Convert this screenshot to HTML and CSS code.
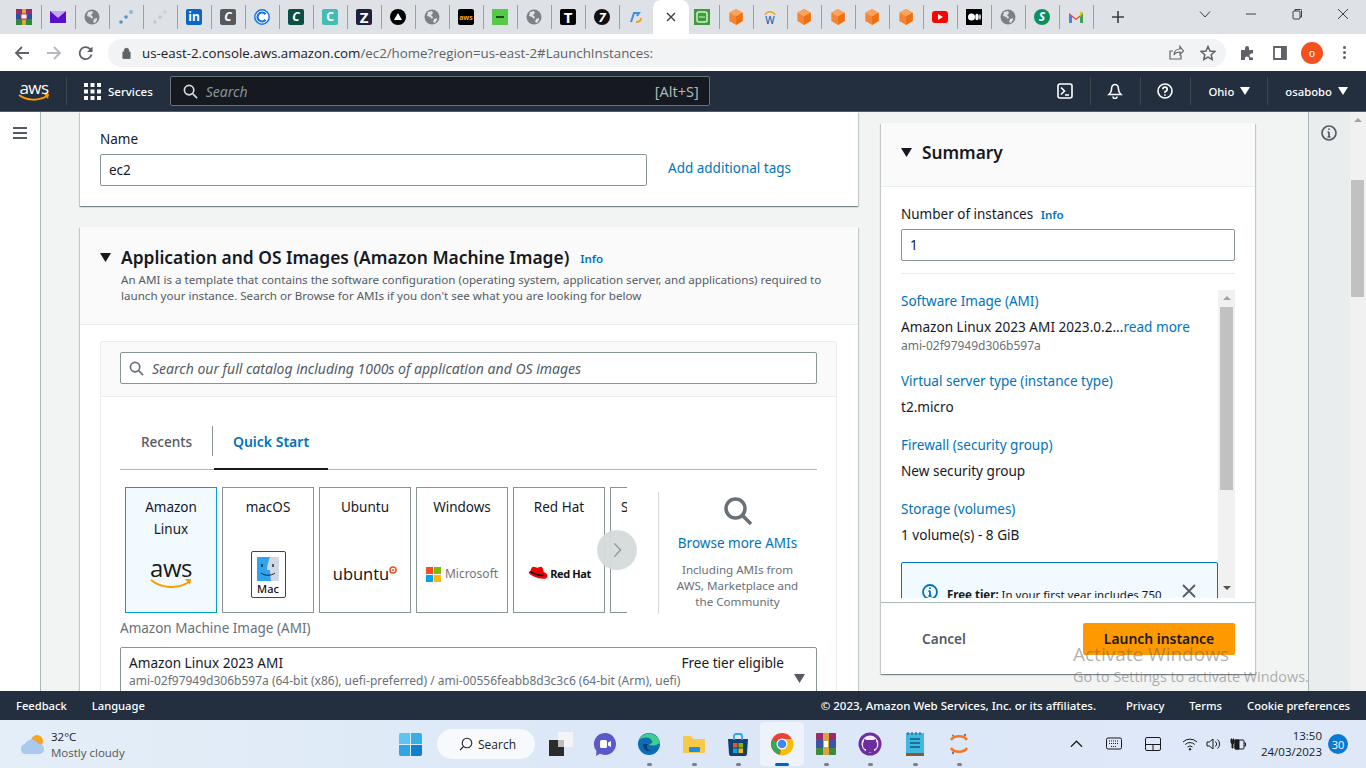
FILE: index.html
```html
<!DOCTYPE html>
<html lang="en">
<head>
    <meta charset="UTF-8">
    <title>Launch an instance | EC2 Management Console</title>
    <link rel="stylesheet" href="styles.css">
</head>
<body>
    <svg class="defs" width="0" height="0">
        <symbol id="globe" viewBox="0 0 16 16">
            <circle cx="8" cy="8" r="7.5" fill="#7d8186"/>
            <path d="M4 3l4-1 1 2-2 2 2 2-1 2-2-2-3-1zM10 10l3-1 0 2-2 3-2-1z" fill="#dee1e6"/>
        </symbol>
        <symbol id="cube" viewBox="0 0 16 18">
            <path d="M8 0l7.5 4.2v9.3L8 18 .5 13.500V4.200z" fill="#f58536"/>
            <path d="M8 0l7.500 4.200L8 8.500.5 4.200z" fill="#f9a35c"/>
            <path d="M8 8.500V18l7.500-4.500V4.200z" fill="#ec7211"/>
        </symbol>
        <symbol id="caret" viewBox="0 0 10 8">
            <path d="M0 0h10L5 8z"/>
        </symbol>
    </svg>

    <!-- Browser tabs -->
    <div class="tabstrip">
        <div class="tab"><svg class="fav" viewBox="0 0 16 16"><rect width="16" height="5" fill="#9c2a6b"/><rect y="5" width="16" height="5" fill="#2b4fa8"/><rect y="10" width="16" height="6" fill="#2f8a3c"/><rect x="6" width="4" height="16" fill="#d9a441"/><rect x="5" y="5" width="6" height="5" fill="#fff" stroke="#b33" /></svg></div>
        <div class="tab"><svg class="fav" viewBox="0 0 16 16"><rect y="2" width="16" height="12" fill="#5a0fc8"/><path d="M0 2h16L8 9z" fill="#c9a6f5"/></svg></div>
        <div class="tab"><svg class="fav"><use href="#globe"/></svg></div>
        <div class="tab"><svg class="fav" viewBox="0 0 16 16"><circle cx="3" cy="13" r="1.800" fill="#5b8dd6"/><circle cx="8" cy="8" r="1.800" fill="#5b8dd6"/><circle cx="13" cy="3" r="2" fill="#8fb4e6"/></svg></div>
        <div class="tab"><svg class="fav" viewBox="0 0 16 16"><circle cx="3" cy="13" r="1.800" fill="#c4c7cb"/><circle cx="8" cy="8" r="1.800" fill="#c4c7cb"/><circle cx="13" cy="3" r="2" fill="#d0d3d6"/></svg></div>
        <div class="tab"><span class="letter linkedin">in</span></div>
        <div class="tab"><span class="letter coursera">C</span></div>
        <div class="tab"><svg class="fav" viewBox="0 0 16 16"><circle cx="8" cy="8" r="7.200" fill="#fff" stroke="#1673e6" stroke-width="1.500"/><path d="M11.500 5.200a4.500 4.500 0 1 0 0 5.600" fill="none" stroke="#1673e6" stroke-width="2.200"/></svg></div>
        <div class="tab"><span class="letter cdark">C</span></div>
        <div class="tab"><span class="letter cteal">C</span></div>
        <div class="tab"><span class="letter zed">Z</span></div>
        <div class="tab"><svg class="fav" viewBox="0 0 16 16"><circle cx="8" cy="8" r="8" fill="#000"/><path d="M8 4l4 7H4z" fill="#fff"/></svg></div>
        <div class="tab"><svg class="fav"><use href="#globe"/></svg></div>
        <div class="tab"><span class="letter awsfav">aws</span></div>
        <div class="tab"><svg class="fav" viewBox="0 0 16 16"><rect width="16" height="16" fill="#56c94a"/><rect x="4" y="7" width="8" height="2" fill="#184d16"/></svg></div>
        <div class="tab"><svg class="fav"><use href="#globe"/></svg></div>
        <div class="tab"><span class="letter tfav">T</span></div>
        <div class="tab"><span class="letter sevenfav">7</span></div>
        <div class="tab"><svg class="fav" viewBox="0 0 16 16"><path d="M3 13L6 4h5l-2 3" fill="none" stroke="#3b8fe0" stroke-width="2"/><path d="M8 13c3 0 5-1 5-4" fill="none" stroke="#f0a030" stroke-width="2"/></svg></div>
        <div class="tab tab-active"><svg class="closex" viewBox="0 0 10 10"><path d="M1 1l8 8M9 1l-8 8"/></svg></div>
        <div class="tab"><svg class="fav" viewBox="0 0 16 16"><rect width="16" height="16" fill="#3f9a3c"/><rect x="3" y="3" width="10" height="10" rx="2" fill="none" stroke="#d7f0d0" stroke-width="1.500"/><path d="M5 8h6" stroke="#d7f0d0"/></svg></div>
        <div class="tab"><svg class="fav"><use href="#cube"/></svg></div>
        <div class="tab"><svg class="fav" viewBox="0 0 16 16"><path d="M3 6a5.500 5.500 0 0 1 10 0" fill="none" stroke="#f5a623" stroke-width="1.400"/><text x="8" y="14.500" class="wfav">W</text></svg></div>
        <div class="tab"><svg class="fav"><use href="#cube"/></svg></div>
        <div class="tab"><svg class="fav"><use href="#cube"/></svg></div>
        <div class="tab"><svg class="fav"><use href="#cube"/></svg></div>
        <div class="tab"><svg class="fav"><use href="#cube"/></svg></div>
        <div class="tab"><svg class="fav" viewBox="0 0 16 16"><rect y="2" width="16" height="12" rx="3" fill="#f00"/><path d="M6 5l5 3-5 3z" fill="#fff"/></svg></div>
        <div class="tab"><svg class="fav" viewBox="0 0 16 16"><rect width="16" height="16" fill="#000"/><circle cx="5.500" cy="8" r="3.500" fill="#fff"/><ellipse cx="11" cy="8" rx="1.700" ry="3.300" fill="#fff"/><ellipse cx="14" cy="8" rx=".8" ry="3" fill="#fff"/></svg></div>
        <div class="tab"><svg class="fav"><use href="#globe"/></svg></div>
        <div class="tab"><span class="letter sfav">S</span></div>
        <div class="tab tab-last"><svg class="fav" viewBox="0 0 16 16"><path d="M1 14V4l7 5.500L15 4v10h-3V8L8 11 4 8v6z" fill="#ea4335"/><path d="M1 14h3V8L1 4z" fill="#4285f4"/><path d="M12 14h3V4l-3 4z" fill="#34a853"/><path d="M12 8l3-4-2-1.500L12 3z" fill="#fbbc04"/></svg></div>
        <svg class="newtab" viewBox="0 0 12 12"><path d="M6 0v12M0 6h12"/></svg>
        <div class="winctl">
            <svg viewBox="0 0 12 12"><path d="M1 3.500l5 5.500 5-5.500"/></svg>
            <svg viewBox="0 0 12 12"><path d="M1 6h10"/></svg>
            <svg viewBox="0 0 12 12"><rect x="2" y="3" width="7" height="8" rx="1"/><path d="M4 3V1.500h5.500a1 1 0 0 1 1 1V9H9"/></svg>
            <svg viewBox="0 0 12 12"><path d="M1 1l10 10M11 1L1 11"/></svg>
        </div>
    </div>

    <!-- Address bar -->
    <div class="toolbar">
        <svg class="tool tool-back" viewBox="0 0 16 16"><path d="M15 8H2M8 2L2 8l6 6"/></svg>
        <svg class="tool tool-fwd" viewBox="0 0 16 16"><path d="M1 8h13M8 2l6 6-6 6"/></svg>
        <svg class="tool tool-reload" viewBox="0 0 16 16"><path d="M13.500 9.500A6 6 0 1 1 12 4l2 2"/><path class="solid" d="M14.500 1.500V7H9z"/></svg>
        <div class="omnibox">
            <svg class="lock" viewBox="0 0 10 12"><path d="M1 5h8v7H1zM2.500 5V3.300a2.500 2.500 0 0 1 5 0V5" /></svg>
            <span class="url"><b>us-east-2.console.aws.amazon.com</b>/ec2/home?region=us-east-2#LaunchInstances:</span>
            <svg class="omni-icon" viewBox="0 0 16 16"><path d="M13 10v4H2V6h3M6 10c0-4 3-6 6-6V1.500L15.500 6 12 9.500V7c-3 0-5 1-6 3z"/></svg>
            <svg class="omni-icon star" viewBox="0 0 16 16"><path d="M8 1.500l2 4.500 4.800.5-3.600 3.200 1 4.800L8 12.100l-4.200 2.400 1-4.800L1.200 6.500 6 6z"/></svg>
        </div>
        <svg class="ext" viewBox="0 0 16 16"><path d="M1 5h4V3a2 2 0 0 1 4 0v2h4v3.500h-1.500a2 2 0 0 0 0 4H13V15H9v-1.500a2 2 0 0 0-4 0V15H1z" fill="#5f6368"/></svg>
        <svg class="ext" viewBox="0 0 16 16"><path d="M2 2h12v12H2z" fill="none" stroke="#5f6368" stroke-width="1.800"/><rect x="9" y="2" width="5" height="12" fill="#5f6368"/></svg>
        <span class="avatar">o</span>
        <span class="menu-dots"><i></i><i></i><i></i></span>
    </div>

    <!-- AWS top navigation -->
    <nav class="awsnav">
        <div class="aws-logo">
            <span class="aws-word">aws</span>
            <svg viewBox="0 0 32 8"><path class="smile" d="M1 1c8 6 20 6 28 1"/><path class="smile-tip" d="M26 0l5 0-1 5z"/></svg>
        </div>
        <span class="nav-sep nav-sep-first"></span>
        <svg class="grid-icon" viewBox="0 0 17 17"><path d="M0 0h4v4H0zM6.500 0h4v4h-4zM13 0h4v4h-4zM0 6.500h4v4H0zM6.500 6.500h4v4h-4zM13 6.500h4v4h-4zM0 13h4v4H0zM6.500 13h4v4h-4zM13 13h4v4h-4z"/></svg>
        <span class="services">Services</span>
        <div class="nav-search">
            <svg class="mag" viewBox="0 0 16 16"><circle cx="6.500" cy="6.500" r="5"/><path d="M10.500 10.500L15 15"/></svg>
            <span class="nav-search-text">Search</span>
            <span class="nav-search-key">[Alt+S]</span>
        </div>
        <div class="nav-right">
            <svg class="nav-icon" viewBox="0 0 16 16"><rect x="1" y="1" width="14" height="14" rx="2"/><path d="M4 4.500L7.500 8 4 11.500M8 12h4"/></svg>
            <span class="nav-sep"></span>
            <svg class="nav-icon" viewBox="0 0 16 16"><path d="M8 1.500c-2.800 0-3.500 2.500-3.500 5 0 2.500-1 3.500-2.500 5h12c-1.500-1.500-2.500-2.500-2.500-5 0-2.500-.7-5-3.500-5zM6 13.500a2 2 0 0 0 4 0"/></svg>
            <span class="nav-sep"></span>
            <svg class="nav-icon" viewBox="0 0 16 16"><circle cx="8" cy="8" r="7"/><path d="M5.800 6.200A2.200 2.200 0 1 1 8 8.500V10M8 11.200v1.500"/></svg>
            <span class="nav-sep"></span>
            <span class="nav-menu">Ohio<svg class="nav-caret"><use href="#caret"/></svg></span>
            <span class="nav-sep"></span>
            <span class="nav-menu">osabobo<svg class="nav-caret"><use href="#caret"/></svg></span>
        </div>
    </nav>

    <div class="console">
        <aside class="leftrail">
            <svg class="burger" viewBox="0 0 14 12"><path d="M0 1h14M0 6h14M0 11h14"/></svg>
        </aside>

        <main class="content">
            <div class="wizard">
                <section class="card name-card">
                    <label class="field-label">Name</label>
                    <div class="name-row">
                        <div class="text-input name-input">ec2</div>
                        <a class="link">Add additional tags</a>
                    </div>
                </section>

                <section class="card ami-card">
                    <header class="ami-head">
                        <div class="ami-title">
                            <svg class="section-caret"><use href="#caret"/></svg>
                            <h2>Application and OS Images (Amazon Machine Image)</h2>
                            <a class="info">Info</a>
                        </div>
                        <p>An AMI is a template that contains the software configuration (operating system, application server, and applications) required to launch your instance. Search or Browse for AMIs if you don't see what you are looking for below</p>
                    </header>
                    <div class="ami-body">
                        <div class="catalog">
                            <div class="catalog-search">
                                <div class="text-input search-input">
                                    <svg class="mag mag-dark" viewBox="0 0 16 16"><circle cx="6.500" cy="6.500" r="5"/><path d="M10.500 10.500L15 15"/></svg>
                                    <span>Search our full catalog including 1000s of application and OS images</span>
                                </div>
                            </div>
                            <div class="catalog-main">
                                <div class="ami-tabs">
                                    <span class="ami-tab">Recents</span>
                                    <span class="ami-tab ami-tab-active">Quick Start</span>
                                </div>
                                <div class="os-row">
                                    <div class="os-list">
                                        <div class="os-track">
                                            <div class="os-card os-selected">
                                                <span class="os-name">Amazon Linux</span>
                                                <div class="os-logo logo-aws">
                                                    <span>aws</span>
                                                    <svg viewBox="0 0 42 12"><path class="smile" d="M1 2c11 9 27 9 38 2"/><path class="smile-tip" d="M35 1h6l-1 6z"/></svg>
                                                </div>
                                            </div>
                                            <div class="os-card">
                                                <span class="os-name">macOS</span>
                                                <div class="os-logo">
                                                    <div class="mac-box">
                                                        <svg viewBox="0 0 22 24"><rect width="22" height="24" rx="1" fill="#cfd8e3"/><path d="M0 1a1 1 0 0 1 1-1h12c-2 5-3 9-3 13h3c0 4 .5 7 1 11H1a1 1 0 0 1-1-1z" fill="#2ea3ee"/><path d="M5 7v3M16 7v3" stroke="#123" stroke-width="1.400"/><path d="M4 16c4 3 10 3 14 0" fill="none" stroke="#123"/></svg>
                                                        <span>Mac</span>
                                                    </div>
                                                </div>
                                            </div>
                                            <div class="os-card">
                                                <span class="os-name">Ubuntu</span>
                                                <div class="os-logo logo-ubuntu">ubuntu<svg viewBox="0 0 8 8"><circle cx="4" cy="4" r="3" fill="#fff" stroke="#e95420" stroke-width="1.600"/><circle cx="4" cy="4" r="1" fill="#e95420"/></svg></div>
                                            </div>
                                            <div class="os-card">
                                                <span class="os-name">Windows</span>
                                                <div class="os-logo logo-ms">
                                                    <svg viewBox="0 0 16 16"><rect width="7.500" height="7.500" fill="#f25022"/><rect x="8.500" width="7.500" height="7.500" fill="#7fba00"/><rect y="8.500" width="7.500" height="7.500" fill="#00a4ef"/><rect x="8.500" y="8.500" width="7.500" height="7.500" fill="#ffb900"/></svg>
                                                    <span>Microsoft</span>
                                                </div>
                                            </div>
                                            <div class="os-card">
                                                <span class="os-name">Red Hat</span>
                                                <div class="os-logo logo-rh">
                                                    <svg viewBox="0 0 22 18"><path d="M7 1.500c1.500 0 2.500 1 4 1 1 0 2-1 3.500-1 1.500 0 2.300 1.500 3 5.500 2.500 1 4 2.500 4 4 0 2-2 3-4.500 3-6 0-13.500-3.500-15-6-.5-1 .5-1.500 1.500-1.500.8-3 1.500-5 3.500-5z" fill="#e00"/><path d="M3.500 6.500c3 2 9 4 14 4" fill="none" stroke="#111" stroke-width="1.500"/></svg>
                                                    <span>Red Hat</span>
                                                </div>
                                            </div>
                                            <div class="os-card os-cut">
                                                <span class="os-name">SUSE Linux</span>
                                            </div>
                                        </div>
                                        <span class="os-next"><svg viewBox="0 0 10 18"><path d="M1.500 1.500L8.500 9l-7 7.500"/></svg></span>
                                    </div>
                                    <div class="browse">
                                        <svg class="browse-mag" viewBox="0 0 30 30"><circle cx="12.500" cy="12.500" r="9.500"/><path d="M19.500 19.500L28 28"/></svg>
                                        <a class="link browse-link">Browse more AMIs</a>
                                        <p>Including AMIs from AWS, Marketplace and the Community</p>
                                    </div>
                                </div>
                                <div class="ami-field">
                                    <label class="field-label ami-label">Amazon Machine Image (AMI)</label>
                                    <div class="ami-select">
                                        <div class="ami-select-top"><span>Amazon Linux 2023 AMI</span><span>Free tier eligible</span></div>
                                        <div class="ami-select-sub">ami-02f97949d306b597a (64-bit (x86), uefi-preferred) / ami-00556feabb8d3c3c6 (64-bit (Arm), uefi)</div>
                                        <svg class="select-caret"><use href="#caret"/></svg>
                                    </div>
                                </div>
                            </div>
                        </div>
                    </div>
                </section>
            </div>

            <aside class="summary">
                <header class="summary-head">
                    <svg class="section-caret"><use href="#caret"/></svg>
                    <h2>Summary</h2>
                </header>
                <div class="summary-body">
                    <div class="instances">
                        <label class="field-label">Number of instances <a class="info">Info</a></label>
                        <div class="text-input count-input">1</div>
                    </div>
                    <div class="summary-scroll">
                        <div class="summary-list">
                            <a class="link">Software Image (AMI)</a>
                            <p class="value">Amazon Linux 2023 AMI 2023.0.2...<a class="link">read more</a></p>
                            <p class="subvalue">ami-02f97949d306b597a</p>
                            <a class="link item-gap">Virtual server type (instance type)</a>
                            <p class="value">t2.micro</p>
                            <a class="link item-gap">Firewall (security group)</a>
                            <p class="value">New security group</p>
                            <a class="link item-gap">Storage (volumes)</a>
                            <p class="value">1 volume(s) - 8 GiB</p>
                            <div class="free-tier">
                                <svg class="ft-info" viewBox="0 0 16 16"><circle cx="8" cy="8" r="7"/><path d="M8 7v5M6.500 12h3M6.500 7H8M8 3.500v1.500"/></svg>
                                <span><b>Free tier:</b> In your first year includes 750</span>
                                <svg class="ft-close" viewBox="0 0 14 14"><path d="M1 1l12 12M13 1L1 13"/></svg>
                            </div>
                        </div>
                        <div class="inner-scrollbar">
                            <i class="arrow-up"></i>
                            <span class="inner-thumb"></span>
                            <i class="arrow-down"></i>
                        </div>
                    </div>
                </div>
                <footer class="summary-foot">
                    <span class="cancel">Cancel</span>
                    <button class="launch" type="button">Launch instance</button>
                </footer>
            </aside>
        </main>

        <aside class="rightrail">
            <svg class="rail-info" viewBox="0 0 16 16"><circle cx="8" cy="8" r="7"/><path d="M8 7v5M6.500 12h3M6.500 7H8M8 3.500v1.500"/></svg>
        </aside>
        <div class="page-scrollbar">
            <i class="arrow-up"></i>
            <span class="page-thumb"></span>
        </div>
    </div>

    <footer class="awsfooter">
        <span>Feedback</span>
        <span>Language</span>
        <span class="copyright">© 2023, Amazon Web Services, Inc. or its affiliates.</span>
        <span>Privacy</span>
        <span>Terms</span>
        <span>Cookie preferences</span>
    </footer>

    <!-- Windows taskbar -->
    <div class="taskbar">
        <div class="weather">
            <svg viewBox="0 0 26 24"><circle cx="17" cy="8" r="6" fill="#f5a623"/><path d="M6 21a5 5 0 0 1-1-9.900A7 7 0 0 1 18 11a5 5 0 0 1 2 10z" fill="#a9c9ee"/></svg>
            <div><span class="temp">32°C</span><span class="sky">Mostly cloudy</span></div>
        </div>
        <div class="apps">
            <svg class="winlogo" viewBox="0 0 23 23"><path d="M0 2a2 2 0 0 1 2-2h9v11H0z" fill="#5cc5f2"/><path d="M12 0h9a2 2 0 0 1 2 2v9H12z" fill="#38aee8"/><path d="M0 12h11v11H2a2 2 0 0 1-2-2z" fill="#2fa6e4"/><path d="M12 12h11v9a2 2 0 0 1-2 2h-9z" fill="#0f7fd0"/></svg>
            <div class="win-search">
                <svg viewBox="0 0 14 14"><circle cx="8" cy="6" r="4.800"/><path d="M4.500 9.500L1 13"/></svg>
                <span>Search</span>
            </div>
            <div class="app"><svg viewBox="0 0 24 24"><rect x="9" y="0" width="15" height="15" fill="#f4f4f4"/><rect y="8" width="15" height="16" fill="#2b2b2b"/><rect x="9" y="8" width="6" height="7" fill="#bdbdbd"/></svg></div>
            <div class="app"><svg viewBox="0 0 24 24"><path d="M12 1a11 11 0 1 1-5 20.800L3 24l.5-5A11 11 0 0 1 12 1z" fill="#5b58c9"/><rect x="7" y="8" width="7" height="8" rx="1.500" fill="#fff"/><path d="M15 10.500l3-1.500v6l-3-1.500z" fill="#fff"/></svg></div>
            <div class="app app-open"><svg viewBox="0 0 24 24"><circle cx="12" cy="12" r="11" fill="#0c6db5"/><path d="M23 12a11 11 0 0 0-21-4c3-3 11-4 13 1 1 2-1 3-3 3 1 2 6 2 9 0 1-.5 2-.5 2 0z" fill="#3ecf8e"/><path d="M6 12c0 5 4 8 8 7-4-1-5-5-3-7z" fill="#0a3f7a"/></svg></div>
            <div class="app app-open"><svg viewBox="0 0 24 24"><path d="M1 5a1 1 0 0 1 1-1h7l2 3h11a1 1 0 0 1 1 1v12a1 1 0 0 1-1 1H2a1 1 0 0 1-1-1z" fill="#f7c948"/><rect x="7" y="15" width="11" height="5" rx="1" fill="#1d8fe0"/></svg></div>
            <div class="app app-open"><svg viewBox="0 0 24 24"><path d="M2 7h20l-1 15a2 2 0 0 1-2 2H5a2 2 0 0 1-2-2z" fill="#14406d"/><path d="M8 8V4a2 2 0 0 1 2-2h4a2 2 0 0 1 2 2v4" fill="none" stroke="#2aa5e8" stroke-width="1.800"/><rect x="7" y="11" width="4.500" height="4.500" fill="#f25022"/><rect x="12.500" y="11" width="4.500" height="4.500" fill="#7fba00"/><rect x="7" y="16.500" width="4.500" height="4.500" fill="#00a4ef"/><rect x="12.500" y="16.500" width="4.500" height="4.500" fill="#ffb900"/></svg></div>
            <div class="app app-active"><svg viewBox="0 0 24 24"><circle cx="12" cy="12" r="11" fill="#ea4335"/><path d="M12 12L2 8a11 11 0 0 0 7 14.600z" fill="#34a853"/><path d="M12 7h10a11 11 0 0 1-12 16z" fill="#fbbc04"/><circle cx="12" cy="12" r="5.500" fill="#fff"/><circle cx="12" cy="12" r="4.300" fill="#4285f4"/></svg></div>
            <div class="app app-open"><svg viewBox="0 0 24 24"><rect x="2" y="1" width="20" height="7" rx="1" fill="#9c2a6b"/><rect x="2" y="8" width="20" height="8" fill="#3a54a6"/><rect x="2" y="16" width="20" height="7" rx="1" fill="#3b8a3e"/><rect x="9" y="1" width="6" height="22" fill="#d9a441"/><rect x="10" y="9" width="4" height="6" fill="#fff"/></svg></div>
            <div class="app app-open"><svg viewBox="0 0 24 24"><circle cx="12" cy="12" r="11.500" fill="#6e2d9e"/><circle cx="12" cy="12" r="8.500" fill="#f1e8f7"/><path d="M8 20v-3c-2 0-3-1-3-5 0-1 .5-2 1-2.500V7l2.500 1h7L18 7v2.500c.5.500 1 1.500 1 2.500 0 4-1 5-3 5v3z" fill="#6e2d9e"/></svg></div>
            <div class="app app-open"><svg viewBox="0 0 24 24"><rect x="3" y="1" width="18" height="21" fill="#3fb8e0"/><rect x="3" y="21" width="18" height="3" fill="#8a5a2b"/><path d="M7 7h10M7 11h10M7 15h10" stroke="#0e5a85" stroke-width="1.600"/><path d="M5 0v3M9 0v3M13 0v3M17 0v3" stroke="#0e5a85"/></svg></div>
            <div class="app app-open"><svg viewBox="0 0 24 24"><path d="M4 8c3-5 13-5 16 0" fill="none" stroke="#f37726" stroke-width="2.500"/><path d="M4 16c3 5 13 5 16 0" fill="none" stroke="#f37726" stroke-width="2.500"/><circle cx="18" cy="3" r="1.200" fill="#767677"/><circle cx="6" cy="3.500" r="1" fill="#767677"/><circle cx="6" cy="21" r="1.200" fill="#767677"/></svg></div>
        </div>
        <div class="tray">
            <svg class="tray-icon tray-chevron" viewBox="0 0 14 8"><path d="M1 7l6-6 6 6"/></svg>
            <svg class="tray-icon tray-keys" viewBox="0 0 16 14"><rect x=".5" y="1" width="15" height="11" rx="1.500"/><path d="M3 4h10M3 6.500h10M5 9.500h6" stroke-dasharray="1 1"/></svg>
            <svg class="tray-icon tray-pad" viewBox="0 0 16 14"><rect x=".5" y=".5" width="15" height="13" rx="1.500"/><path d="M.5 7.500h15M8 7.500v6"/></svg>
            <svg class="tray-icon tray-wifi" viewBox="0 0 16 14"><path d="M1 5a10 10 0 0 1 14 0M3.200 7.500a7 7 0 0 1 9.600 0M5.500 10a3.800 3.800 0 0 1 5 0"/><circle cx="8" cy="12.300" r=".8"/></svg>
            <svg class="tray-icon tray-vol" viewBox="0 0 16 14"><path d="M1 5h2.500L7 2v10L3.500 9H1zM9.500 4.500a3.500 3.500 0 0 1 0 5M11.500 2.500a6 6 0 0 1 0 9"/></svg>
            <svg class="tray-icon tray-batt" viewBox="0 0 16 14"><rect x="5" y="3" width="9" height="9" rx="1"/><path d="M14 6h1.500v3H14"/><path class="solid" d="M1 2h1v2h1V2h1v3.500L3 7v4H2V7L1 5.500zM5 3h4v9H5z"/></svg>
            <div class="clock"><span>13:50</span><span>24/03/2023</span></div>
            <span class="notif">30</span>
        </div>
    </div>

    <div class="activate">
        <span class="activate-big">Activate Windows</span>
        <span class="activate-small">Go to Settings to activate Windows.</span>
    </div>
</body>
</html>
```

FILE: styles.css
```css
* {
    box-sizing: border-box;
}

html, body {
    margin: 0;
    padding: 0;
    height: 768px;
    overflow: hidden;
}

body {
    display: flex;
    flex-direction: column;
    position: relative;
    width: 1366px;
    font-family: "Noto Sans", "Open Sans", sans-serif;
    font-size: 13.500px;
    color: #16191f;
    background: #f2f3f3;
}

.defs {
    position: absolute;
}

h2, p {
    margin: 0;
}

/* Browser tabs */
.tabstrip {
    flex: 0 0 34px;
    display: flex;
    align-items: center;
    padding-left: 8px;
    background: #dee1e6;
}

.tab {
    flex: 0 0 34px;
    height: 24px;
    display: flex;
    align-items: center;
    justify-content: center;
    padding-right: 1px;
    border-right: 1px solid #9ba0a6;
}

.tab-active {
    flex-basis: 36px;
    height: 34px;
    margin-right: -3px;
    margin-left: -1px;
    padding: 0;
    background: #fff;
    border-right: 0;
    border-radius: 8px 8px 0 0;
    position: relative;
}

.tab-last {
    border-right: 1px solid #9ba0a6;
}

.fav {
    width: 16px;
    height: 16px;
}

.letter {
    width: 16px;
    height: 16px;
    display: flex;
    align-items: center;
    justify-content: center;
    color: #fff;
    font-size: 12px;
    font-weight: 700;
    line-height: 1;
    border-radius: 2px;
}

.linkedin { background: #0a66c2; }
.coursera { background: #55585c; font-style: italic; }
.cdark { background: #0b4f45; font-style: italic; }
.cteal { background: #43bdb4; }
.zed { background: #1f1f3d; font-size: 15px; }
.awsfav { background: #000; font-size: 7px; color: #f5a623; }
.tfav { background: #000; font-size: 15px; }
.sevenfav { background: #111; border-radius: 50%; font-size: 13px; font-style: italic; }
.sfav { background: #0c8f5f; border-radius: 50%; font-size: 12px; font-style: italic; }

.wfav {
    font-size: 10px;
    font-weight: 500;
    fill: #1a66b0;
    text-anchor: middle;
}

.closex {
    width: 10px;
    height: 10px;
    fill: none;
    stroke: #3c4043;
    stroke-width: 1.400;
}

.newtab {
    width: 12px;
    height: 12px;
    margin-left: 18px;
    fill: none;
    stroke: #3c4043;
    stroke-width: 1.600;
}

.winctl {
    margin-left: auto;
    width: 184px;
    display: flex;
    padding-left: 17px;
    gap: 34px;
    padding-bottom: 6px;
}

.winctl svg {
    width: 12px;
    height: 12px;
    flex: none;
    fill: none;
    stroke: #3c4043;
}

/* Address bar */
.toolbar {
    flex: 0 0 37px;
    display: flex;
    align-items: center;
    background: #fff;
    padding-left: 14px;
}

.tool {
    width: 16px;
    height: 16px;
    margin-right: 16px;
    fill: none;
    stroke: #5f6368;
    stroke-width: 1.800;
}

.tool .solid {
    fill: #5f6368;
    stroke: none;
}

.tool-fwd {
    stroke: #b5b8bc;
}

.tool-reload {
    margin-right: 14px;
}

.omnibox {
    flex: none;
    width: 1118px;
    height: 28px;
    margin-right: 14px;
    border-radius: 14px;
    background: #f1f3f4;
    display: flex;
    align-items: center;
    padding: 0 10px 0 14px;
}

.lock {
    width: 9px;
    height: 12px;
    margin-right: 11px;
    fill: #5f6368;
    stroke: #5f6368;
}

.url {
    font-family: "Open Sans", sans-serif;
    font-size: 13.300px;
    color: #5f6368;
    margin-right: auto;
    white-space: nowrap;
}

.url b {
    font-weight: 400;
    color: #202124;
}

.omni-icon {
    width: 16px;
    height: 16px;
    margin-left: 16px;
    fill: none;
    stroke: #5f6368;
    stroke-width: 1.200;
}

.omni-icon.star {
    stroke-width: 1.500;
}

.ext {
    flex: none;
    width: 16px;
    height: 16px;
    margin-right: 16px;
}

.avatar {
    flex: none;
    width: 22px;
    height: 22px;
    border-radius: 50%;
    background: #f4511e;
    color: #fff;
    font-size: 10px;
    display: flex;
    align-items: center;
    justify-content: center;
    margin-right: 20px;
    margin-left: -3px;
}

.menu-dots {
    display: flex;
    flex-direction: column;
    gap: 2px;
}

.menu-dots i {
    width: 3px;
    height: 3px;
    border-radius: 50%;
    background: #5f6368;
}

/* AWS top navigation */
.awsnav {
    flex: 0 0 41px;
    display: flex;
    align-items: center;
    background: #232f3e;
    border-bottom: 1px solid #545b64;
    color: #fff;
    padding-left: 18px;
}

.aws-logo {
    width: 32px;
    display: flex;
    flex-direction: column;
    align-items: center;
    line-height: 1;
}

.aws-word {
    font-family: "Open Sans", sans-serif;
    font-size: 17px;
    line-height: 13px;
    letter-spacing: -.5px;
    color: #fff;
}

.aws-logo svg {
    width: 32px;
    height: 8px;
}

.smile {
    fill: none;
    stroke: #ff9900;
    stroke-width: 2;
}

.smile-tip {
    fill: #ff9900;
}

.nav-sep {
    width: 1px;
    height: 28px;
    background: #414750;
}

.nav-sep-first {
    margin-left: 16px;
}

.grid-icon {
    width: 17px;
    height: 17px;
    margin-left: 17px;
    fill: #fff;
}

.services {
    margin-left: 7px;
    font-size: 11.500px;
    font-weight: 500;
}

.nav-search {
    width: 540px;
    height: 30px;
    margin-left: 17px;
    display: flex;
    align-items: center;
    padding: 0 10px 0 12px;
    background: #16191f;
    border: 1px solid #687078;
    border-radius: 2px;
}

.mag {
    width: 15px;
    height: 15px;
    fill: none;
    stroke: #d5dbdb;
    stroke-width: 1.800;
    flex: none;
}

.nav-search-text {
    margin-left: 8px;
    font-style: italic;
    color: #879596;
    font-size: 14px;
}

.nav-search-key {
    margin-left: auto;
    color: #aab7b8;
    font-size: 14.500px;
}

.nav-right {
    margin-left: auto;
    display: flex;
    align-items: center;
    height: 100%;
    padding-right: 18px;
}

.nav-icon {
    width: 16px;
    height: 16px;
    fill: none;
    stroke: #fff;
    stroke-width: 1.600;
    margin: 0 17px 0 16px;
}

.nav-menu {
    display: flex;
    align-items: center;
    font-size: 11.300px;
    font-weight: 500;
    gap: 6px;
    padding: 0 0 0 17px;
    margin-right: 17px;
}

.nav-menu:last-child {
    margin-right: 0;
}

.nav-caret {
    width: 10px;
    height: 8px;
    fill: #fff;
}

/* Console layout */
.console {
    flex: 0 0 579px;
    display: flex;
    overflow: hidden;
    min-height: 0;
}

.leftrail {
    flex: 0 0 41px;
    background: #fff;
    border-right: 1px solid #aab7b8;
    padding: 15px 0 0 13px;
}

.burger {
    width: 14px;
    height: 12px;
    display: block;
    fill: none;
    stroke: #545b64;
    stroke-width: 2;
}

.content {
    flex: 1;
    display: flex;
    gap: 23px;
    padding-left: 39px;
    min-width: 0;
}

.wizard {
    flex: 0 0 778px;
    min-width: 0;
    display: flex;
    flex-direction: column;
    gap: 21px;
}

.card {
    flex: none;
    background: #fff;
    box-shadow: 0 1px 1px 0 rgba(0, 28, 36, .3), 1px 1px 1px 0 rgba(0, 28, 36, .15), -1px 1px 1px 0 rgba(0, 28, 36, .15);
}

.field-label {
    display: block;
    font-size: 13.500px;
    color: #16191f;
}

.text-input {
    height: 32px;
    border: 1px solid #879596;
    border-radius: 2px;
    background: #fff;
    display: flex;
    align-items: center;
    padding: 0 8px;
    font-size: 13.500px;
}

.link {
    color: #0073bb;
    font-size: 13.500px;
}

.info {
    color: #0073bb;
    font-size: 11.500px;
    font-weight: 600;
}

.name-card {
    height: 94px;
    padding: 18px 20px 0;
}

.name-card .field-label {
    line-height: 18px;
}

.name-row {
    display: flex;
    align-items: center;
    margin-top: 6px;
}

.name-row .link {
    margin-bottom: 4px;
}

.name-input {
    width: 547px;
    margin-right: 21px;
}

.ami-head {
    height: 98px;
    padding: 18px 20px 0;
    background: #fafafa;
    border-bottom: 1px solid #eaeded;
}

.ami-title {
    display: flex;
    align-items: center;
    height: 24px;
    margin-bottom: 3px;
}

.section-caret {
    width: 11px;
    height: 9px;
    fill: #16191f;
    flex: none;
}

.ami-title h2 {
    margin-left: 10px;
    font-size: 17.400px;
    font-weight: 600;
    white-space: nowrap;
}

.ami-title .info {
    margin-left: 11px;
    margin-top: 3px;
}

.ami-head p {
    margin-left: 21px;
    font-size: 11.600px;
    line-height: 16px;
    color: #545b64;
}

.ami-body {
    padding: 16px 21px 0 20px;
}

.catalog {
    border: 1px solid #eaeded;
    border-radius: 2px;
}

.catalog-search {
    height: 55px;
    padding: 10px 19px 0;
    background: #fafafa;
    border-bottom: 1px solid #eaeded;
}

.search-input {
    gap: 8px;
    font-size: 14px;
    font-style: italic;
    color: #545b64;
    padding-left: 8px;
}

.mag-dark {
    stroke: #687078;
}

.catalog-main {
    padding: 0 19px;
}

.ami-tabs {
    height: 73px;
    display: flex;
    align-items: flex-end;
    border-bottom: 1px solid #aab7b8;
}

.ami-tab {
    height: 43px;
    display: flex;
    align-items: flex-start;
    font-size: 13.600px;
    font-weight: 500;
    color: #545b64;
}

.ami-tab:first-child {
    width: 93px;
    justify-content: center;
    padding-top: 6px;
    position: relative;
}

.ami-tab:first-child::after {
    content: "";
    position: absolute;
    right: 0;
    top: 0;
    bottom: 13px;
    width: 1px;
    background: #879596;
}

.ami-tab-active {
    width: 114px;
    margin-left: 1px;
    justify-content: center;
    padding-top: 5px;
    font-size: 14px;
    color: #0073bb;
    font-weight: 600;
    border-bottom: 2px solid #16191f;
    margin-bottom: -1px;
}

.os-row {
    display: flex;
    padding: 17px 0 0 5px;
}

.os-list {
    flex: 0 0 502px;
    min-width: 0;
    position: relative;
}

.os-track {
    display: flex;
    gap: 5px;
    overflow: hidden;
}

.os-card {
    flex: 0 0 92px;
    height: 126px;
    border: 1px solid #879596;
    text-align: center;
    padding: 8px 8px 0;
    font-size: 13.500px;
    line-height: 22px;
    position: relative;
}

.os-name {
    display: block;
}

.os-selected {
    border-color: #00a1c9;
    background: #f1faff;
}

.os-logo {
    position: absolute;
    left: 0;
    right: 0;
    top: 62px;
    height: 48px;
    display: flex;
    align-items: center;
    justify-content: center;
}

.logo-aws {
    flex-direction: column;
    line-height: 1;
}

.logo-aws span {
    font-family: "Open Sans", sans-serif;
    font-size: 24px;
    line-height: 20px;
    letter-spacing: -.5px;
}

.logo-aws svg {
    width: 42px;
    height: 12px;
}

.mac-box {
    width: 35px;
    height: 47px;
    border: 1px solid #444;
    border-radius: 2px;
    background: #fff;
    display: flex;
    flex-direction: column;
    align-items: center;
    padding-top: 5px;
    font-size: 11px;
    font-weight: 500;
    line-height: 15px;
    color: #111;
}

.mac-box svg {
    width: 22px;
    height: 24px;
}

.logo-ubuntu {
    font-family: "Open Sans", sans-serif;
    font-size: 16.500px;
    color: #111;
    align-items: center;
}

.logo-ubuntu svg {
    width: 8px;
    height: 8px;
    margin-bottom: 8px;
}

.logo-ms {
    gap: 4px;
    font-size: 12px;
    color: #737373;
}

.logo-ms svg {
    width: 15px;
    height: 15px;
}

.logo-rh {
    gap: 2px;
    font-size: 11px;
    font-weight: 700;
    color: #111;
    letter-spacing: -.4px;
}

.logo-rh svg {
    width: 21px;
    height: 18px;
}

.os-cut {
    white-space: nowrap;
    overflow: hidden;
    text-align: left;
    padding-left: 10px;
    border-right: 0;
}

.os-next {
    position: absolute;
    left: 472px;
    top: 43px;
    width: 40px;
    height: 40px;
    border-radius: 50%;
    background: rgba(213, 219, 219, .95);
    display: flex;
    align-items: center;
    justify-content: center;
}

.os-next svg {
    width: 9px;
    height: 16px;
    fill: none;
    stroke: #879596;
    stroke-width: 1.500;
}

.browse {
    flex: none;
    width: 158px;
    height: 122px;
    margin: 5px 0 0 31px;
    border-left: 1px solid #d5dbdb;
    text-align: center;
    padding-top: 4px;
    display: flex;
    flex-direction: column;
    align-items: center;
}

.browse-mag {
    width: 30px;
    height: 30px;
    fill: none;
    stroke: #687078;
    stroke-width: 3.500;
}

.browse-link {
    margin-top: 7px;
    line-height: 20px;
}

.browse p {
    margin-top: 9px;
    width: 130px;
    font-size: 11.600px;
    line-height: 16px;
    color: #687078;
}

.ami-field {
    margin-top: 5px;
}

.ami-label {
    color: #687078;
    line-height: 18px;
}

.ami-select {
    position: relative;
    margin-top: 10px;
    height: 60px;
    border: 1px solid #879596;
    border-radius: 2px;
    padding: 6px 8px;
}

.ami-select-top {
    display: flex;
    justify-content: space-between;
    padding-right: 24px;
    font-size: 13.600px;
    line-height: 18px;
}

.ami-select-sub {
    margin-top: 1px;
    font-size: 12px;
    line-height: 16px;
    color: #687078;
    white-space: nowrap;
}

.select-caret {
    position: absolute;
    right: 11px;
    top: 26px;
    width: 11px;
    height: 9px;
    fill: #545b64;
}

/* Summary panel */
.summary {
    flex: 0 0 374px;
    height: 551px;
    margin-top: 11px;
    background: #fff;
    box-shadow: 0 1px 1px 0 rgba(0, 28, 36, .3), 1px 1px 1px 0 rgba(0, 28, 36, .15), -1px 1px 1px 0 rgba(0, 28, 36, .15);
    display: flex;
    flex-direction: column;
}

.summary-head {
    flex: 0 0 64px;
    display: flex;
    align-items: center;
    padding: 0 0 4px 20px;
    background: #fafafa;
    border-bottom: 1px solid #eaeded;
}

.summary-head h2 {
    margin-left: 10px;
    font-size: 17.300px;
    font-weight: 600;
}

.summary-body {
    flex: 1;
    min-height: 0;
    padding: 0 20px;
    display: flex;
    flex-direction: column;
}

.instances {
    flex: none;
    height: 87px;
    padding-top: 18px;
    border-bottom: 1px solid #eaeded;
}

.instances .field-label {
    line-height: 18px;
}

.instances .info {
    margin-left: 4px;
}

.count-input {
    margin-top: 5px;
}

.summary-scroll {
    flex: none;
    margin-top: 16px;
    height: 308px;
    display: flex;
    overflow: hidden;
}

.summary-list {
    flex: 1;
    min-width: 0;
    overflow: hidden;
}

.summary-list .link {
    display: block;
    line-height: 22px;
}

.summary-list .value {
    margin-top: 4px;
    line-height: 22px;
    font-size: 13.600px;
}

.value .link {
    display: inline !important;
    font-size: 13.600px;
}

.subvalue {
    font-size: 12px;
    line-height: 14px;
    margin-top: 1px;
    color: #687078;
}

.item-gap {
    margin-top: 16px;
}

.subvalue + .item-gap {
    margin-top: 17px;
}

.free-tier {
    margin-top: 16px;
    height: 80px;
    border: 1px solid #0073bb;
    border-radius: 2px;
    background: #f1faff;
    display: flex;
    align-items: flex-start;
    padding: 21px 0 0 20px;
    font-size: 11.500px;
    color: #16191f;
    white-space: nowrap;
}

.ft-info {
    width: 16px;
    height: 16px;
    flex: none;
    margin-right: 9px;
    fill: none;
    stroke: #0073bb;
    stroke-width: 1.800;
}

.free-tier span {
    margin-top: 3px;
    line-height: 16px;
}

.ft-close {
    width: 14px;
    height: 14px;
    flex: none;
    margin-left: 20px;
    fill: none;
    stroke: #545b64;
    stroke-width: 1.800;
}

.inner-scrollbar {
    flex: 0 0 17px;
    background: #f1f1f1;
    position: relative;
}

.inner-thumb {
    position: absolute;
    left: 2px;
    right: 2px;
    top: 17px;
    height: 183px;
    background: #c1c1c1;
}

.arrow-up, .arrow-down {
    position: absolute;
    left: 50%;
    margin-left: -4px;
    border-left: 4px solid transparent;
    border-right: 4px solid transparent;
}

.arrow-up {
    top: 6px;
    border-bottom: 4px solid #a3a3a3;
}

.arrow-down {
    bottom: 8px;
    border-top: 4px solid #505050;
}

.summary-foot {
    flex: 0 0 72px;
    display: flex;
    align-items: center;
    justify-content: space-between;
    padding: 0 20px 0 41px;
    border-top: 1px solid #aab7b8;
}

.cancel {
    color: #545b64;
    font-size: 13.600px;
    font-weight: 600;
}

.launch {
    width: 152px;
    height: 32px;
    background: #ff9900;
    border: 0;
    border-radius: 2px;
    color: #16191f;
    font-family: inherit;
    font-size: 13.900px;
    font-weight: 600;
}

.rightrail {
    flex: 0 0 42px;
    background: #eaeded;
    border-left: 1px solid #aab7b8;
    padding: 13px 0 0 12px;
}

.rail-info {
    width: 16px;
    height: 16px;
    display: block;
    fill: none;
    stroke: #545b64;
    stroke-width: 1.700;
}

.page-scrollbar {
    flex: 0 0 16px;
    background: #f1f1f1;
    position: relative;
}

.page-thumb {
    position: absolute;
    left: 1px;
    right: 2px;
    top: 68px;
    height: 117px;
    background: #c1c1c1;
}

/* Bottom bars */
.awsfooter {
    flex: 0 0 29px;
    display: flex;
    align-items: center;
    gap: 25px;
    padding: 0 16px;
    background: #232f3e;
    color: #fff;
    font-size: 11.200px;
    font-weight: 500;
}

.copyright {
    margin-left: auto;
    margin-right: 5px;
    font-size: 11.500px;
}

.taskbar {
    flex: 0 0 48px;
    display: flex;
    align-items: center;
    background: linear-gradient(90deg, #e4eef8 0%, #dbe7f7 50%, #dfe8f7 100%);
    color: #1b1b1b;
    position: relative;
}

.weather {
    flex: 0 0 399px;
    display: flex;
    align-items: center;
    padding: 2px 0 0 20px;
    font-family: "Open Sans", sans-serif;
    font-size: 11.500px;
}

.weather svg {
    width: 26px;
    height: 24px;
    margin-right: 5px;
}

.temp, .sky {
    display: block;
    line-height: 16px;
}

.sky {
    color: #555;
}

.apps {
    display: flex;
    align-items: center;
}

.winlogo {
    width: 23px;
    height: 23px;
}

.win-search {
    width: 98px;
    height: 30px;
    margin: 0 4px 0 15px;
    background: #f7f9fd;
    border-radius: 15px;
    display: flex;
    align-items: center;
    padding-left: 22px;
    font-family: "Open Sans", sans-serif;
    font-size: 12px;
}

.win-search svg {
    width: 14px;
    height: 14px;
    margin-right: 5px;
    fill: none;
    stroke: #222;
    stroke-width: 1.100;
}

.app {
    flex: 0 0 44.200px;
    height: 44px;
    display: flex;
    align-items: center;
    justify-content: center;
    position: relative;
}

.app svg {
    width: 24px;
    height: 24px;
}

.app-open::after, .app-active::after {
    content: "";
    position: absolute;
    left: 50%;
    bottom: 0;
    width: 5px;
    height: 3px;
    margin-left: -2px;
    border-radius: 2px;
    background: #7b7f86;
}

.app-active {
    background: #eef2fa;
    border-radius: 4px;
}

.app-active::after {
    width: 14px;
    margin-left: -7px;
    background: #0067c0;
}

.tray {
    margin-left: auto;
    display: flex;
    align-items: center;
    padding-right: 18px;
}

.tray-icon {
    width: 16px;
    height: 14px;
    fill: none;
    stroke: #1b1b1b;
    stroke-width: 1;
    margin-left: 8px;
}

.tray-icon .solid, .tray-wifi circle {
    fill: #1b1b1b;
}

.tray-chevron {
    width: 13px;
    height: 8px;
    stroke-width: 1.300;
}

.tray-keys {
    margin-left: 23px;
}

.tray-pad {
    margin-left: 23px;
}

.tray-wifi {
    margin-left: 21px;
}

.clock {
    margin-left: 15px;
    display: flex;
    flex-direction: column;
    align-items: flex-end;
    font-family: "Open Sans", sans-serif;
    font-size: 11.500px;
    line-height: 16px;
}

.notif {
    width: 20px;
    height: 20px;
    margin-left: 6px;
    border-radius: 50%;
    background: #0a78d4;
    color: #fff;
    font-family: "Open Sans", sans-serif;
    font-size: 11px;
    display: flex;
    align-items: center;
    justify-content: center;
}

/* Windows watermark, lies over the page */
.activate {
    position: absolute;
    left: 1073px;
    top: 641px;
    display: flex;
    flex-direction: column;
    font-family: "Open Sans", sans-serif;
    color: rgba(100, 100, 100, .5);
    pointer-events: none;
    white-space: nowrap;
}

.activate-big {
    font-size: 19px;
    line-height: 26px;
}

.activate-small {
    font-size: 14.400px;
    line-height: 20px;
}
```
